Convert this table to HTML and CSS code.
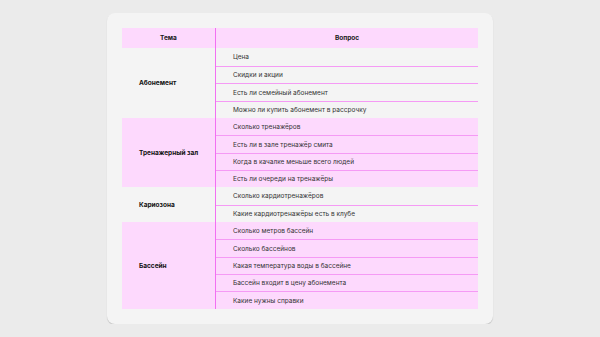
FILE: index.html
```html
<!DOCTYPE html>
<html lang="ru">
<head>
<meta charset="utf-8">
<link rel="stylesheet" href="styles.css">
</head>
<body>
<div class="page">
  <div class="card">
    <div class="table">
      <div class="row-head">
        <div class="cell-left head">Тема</div>
        <div class="cell-right head">Вопрос</div>
      </div>
      <div class="group">
        <div class="cell-left label">Абонемент</div>
        <div class="questions">
          <div class="q tall">Цена</div>
          <div class="q">Скидки и акции</div>
          <div class="q tall">Есть ли семейный абонемент</div>
          <div class="q">Можно ли купить абонемент в рассрочку</div>
        </div>
      </div>
      <div class="group pink">
        <div class="cell-left label">Тренажерный зал</div>
        <div class="questions">
          <div class="q">Сколько тренажёров</div>
          <div class="q tall">Есть ли в зале тренажёр смита</div>
          <div class="q">Когда в качалке меньше всего людей</div>
          <div class="q">Есть ли очереди на тренажёры</div>
        </div>
      </div>
      <div class="group">
        <div class="cell-left label">Кариозона</div>
        <div class="questions">
          <div class="q tall">Сколько кардиотренажёров</div>
          <div class="q">Какие кардиотренажёры есть в клубе</div>
        </div>
      </div>
      <div class="group pink">
        <div class="cell-left label">Бассейн</div>
        <div class="questions">
          <div class="q">Сколько метров бассейн</div>
          <div class="q tall">Сколько бассейнов</div>
          <div class="q">Какая температура воды в бассейне</div>
          <div class="q">Бассейн входит в цену абонемента</div>
          <div class="q tall">Какие нужны справки</div>
        </div>
      </div>
    </div>
  </div>
</div>
</body>
</html>
```
FILE: styles.css
```css
* { box-sizing: border-box; }
html, body {
  margin: 0;
  padding: 0;
  background: #ebebeb;
  font-family: Inter, "Liberation Sans", sans-serif;
  color: #2a2a2a;
}
.page {
  padding: 13px 0 0 107px;
}
.card {
  width: 386px;
  height: 311px;
  background: #f4f4f4;
  border-radius: 8px;
  box-shadow: 0 1px 1px rgba(0, 0, 0, 0.18);
  padding: 15px 15px 0 15px;
}
.table {
  width: 356px;
}
.row-head,
.group {
  display: grid;
  grid-template-columns: 94px 1fr;
}
.row-head {
  height: 20px;
  background: #fdd9fd;
}
.pink {
  background: #fdd9fd;
}
.cell-left {
  border-right: 1px solid #f270f2;
}
.head {
  display: flex;
  align-items: center;
  justify-content: center;
  font-size: 6.5px;
  font-weight: 700;
  color: #1a1a1a;
}
.cell-right.head {
  border: 0;
}
.label {
  display: flex;
  align-items: center;
  padding-left: 17px;
  font-size: 6.5px;
  font-weight: 700;
  color: #111;
}
.questions {
  display: flex;
  flex-direction: column;
}
.q {
  height: 17px;
  display: flex;
  align-items: center;
  padding-left: 17px;
  font-size: 6.5px;
  color: #333;
}
.q.tall {
  height: 18px;
}
.q + .q {
  border-top: 1px solid #f59af5;
}
```
